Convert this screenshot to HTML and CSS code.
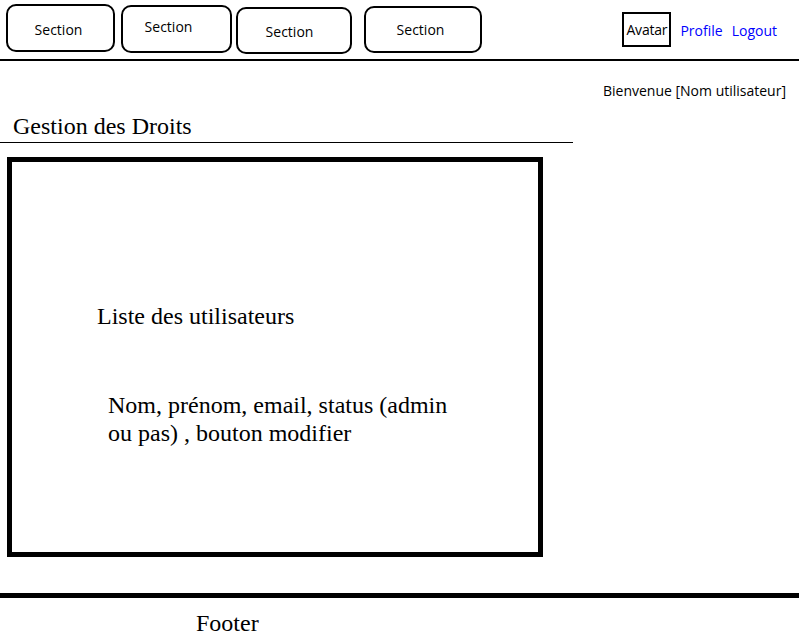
FILE: index.html
```html
<!DOCTYPE html>
<html lang="fr">
<head>
<meta charset="utf-8">
<title>Gestion des Droits</title>
<link rel="stylesheet" href="styles.css">
</head>
<body>
<header class="topbar">
  <nav class="sections">
    <a class="section-btn b1">Section</a>
    <a class="section-btn b2">Section</a>
    <a class="section-btn b3">Section</a>
    <a class="section-btn b4">Section</a>
  </nav>
  <div class="user-links">
    <div class="avatar">Avatar</div>
    <a class="link">Profile</a>
    <a class="link">Logout</a>
  </div>
</header>
<main class="content">
  <p class="welcome">Bienvenue [Nom utilisateur]</p>
  <h1 class="page-title">Gestion des Droits</h1>
  <section class="users-box">
    <p class="users-title">Liste des utilisateurs</p>
    <p class="users-desc">Nom, prénom, email, status (admin ou pas) , bouton modifier</p>
  </section>
</main>
<footer class="footer">
  <p class="footer-text">Footer</p>
</footer>
</body>
</html>
```
FILE: styles.css
```css
* { box-sizing: border-box; }
html, body { margin: 0; padding: 0; background: #fff; }
body {
  font-family: "Liberation Serif", "Times New Roman", serif;
  color: #000;
  width: 799px;
  height: 641px;
  overflow: hidden;
}
.topbar {
  height: 61px;
  border-bottom: 2px solid #000;
  display: flex;
  justify-content: space-between;
  align-items: flex-start;
}
.sections {
  display: flex;
  align-items: flex-start;
  padding-left: 6px;
}
.section-btn {
  display: flex;
  align-items: center;
  justify-content: center;
  border: 2px solid #000;
  border-radius: 10px;
  font-family: "Open Sans", "Liberation Sans", sans-serif;
  font-size: 14px;
  color: #000;
  height: 48px;
}
.b1 { width: 109px; margin-top: 4px; padding-top: 2px; padding-right: 4px; }
.b2 { width: 111px; margin-top: 5px; margin-left: 6px; padding-bottom: 5px; padding-right: 16px; }
.b3 { width: 116px; margin-top: 7px; margin-left: 4px; height: 47px; padding-top: 1px; padding-right: 9px; }
.b4 { width: 118px; margin-top: 6px; margin-left: 12px; height: 47px; padding-right: 5px; }
.user-links {
  display: flex;
  align-items: center;
  margin-top: 12px;
  padding-right: 22px;
  font-family: "Open Sans", "Liberation Sans", sans-serif;
  font-size: 14px;
}
.avatar {
  width: 49px;
  height: 35px;
  border: 2px solid #000;
  display: flex;
  align-items: center;
  justify-content: center;
  color: #000;
  letter-spacing: -0.2px;
}
.link { color: #0000ff; margin-left: 9px; padding-top: 2px; }
.link + .link { margin-left: 9px; }
.content { padding-top: 19px; }
.welcome {
  margin: 0;
  text-align: right;
  padding-right: 13px;
  font-family: "Open Sans", "Liberation Sans", sans-serif;
  font-size: 14px;
  line-height: 22px;
}
.page-title {
  margin: 10px 0 0;
  width: 573px;
  padding-left: 13px;
  font-weight: normal;
  font-size: 24px;
  line-height: 28px;
  height: 31px;
  border-bottom: 1px solid #000;
}
.users-box {
  margin: 14px 0 0 7px;
  width: 536px;
  height: 400px;
  border: 5px solid #000;
  padding: 140px 0 0 85px;
}
.users-title {
  margin: 0;
  font-size: 24px;
  line-height: 28px;
}
.users-desc {
  margin: 61px 0 0 11px;
  width: 350px;
  font-size: 24px;
  line-height: 28px;
}
.footer {
  margin-top: 36px;
  border-top: 5px solid #000;
  padding: 11px 0 0 196px;
}
.footer-text {
  margin: 0;
  font-size: 24px;
  line-height: 28px;
}
```
